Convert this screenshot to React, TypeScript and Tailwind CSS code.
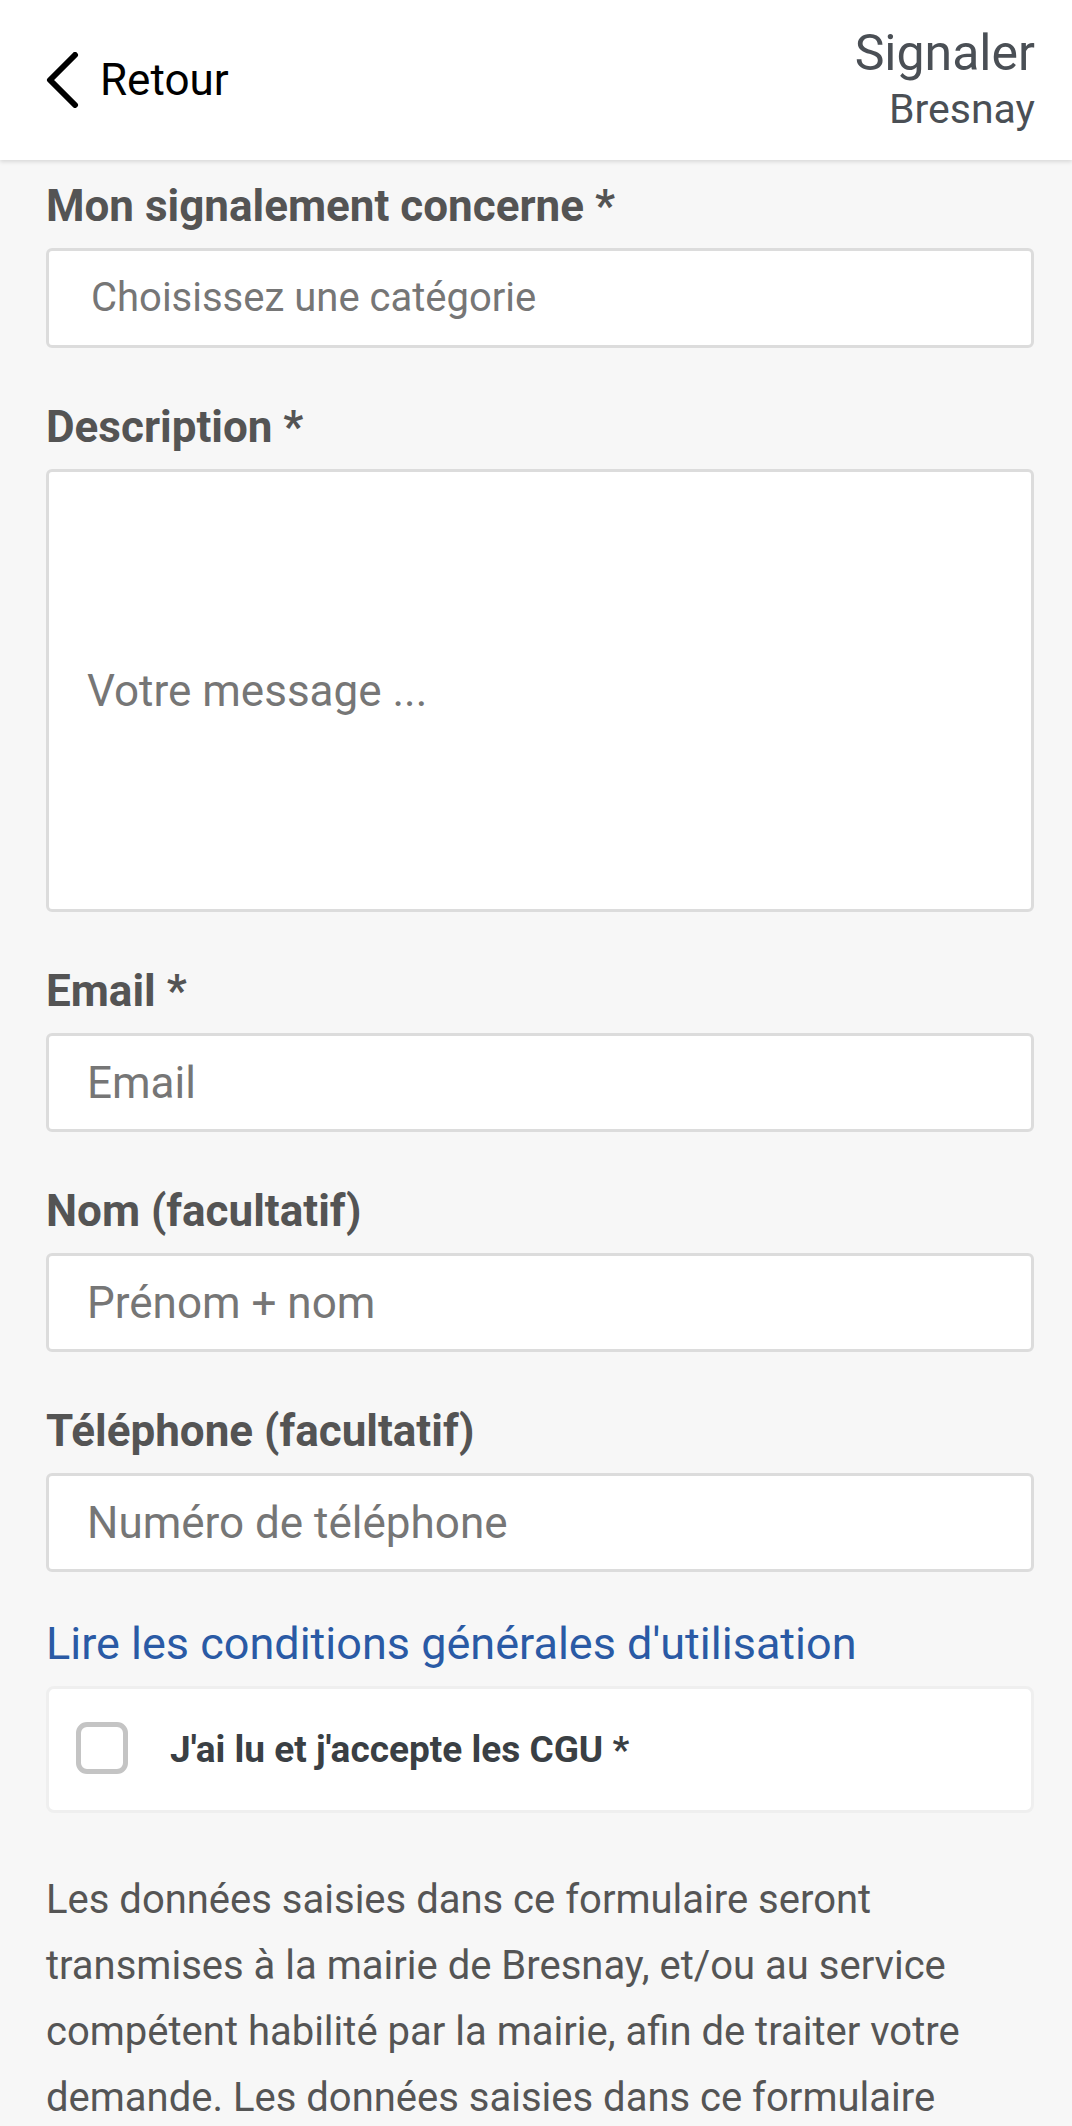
import React from "react";

const fields = [
  { label: "Email *", placeholder: "Email" },
  { label: "Nom (facultatif)", placeholder: "Prénom + nom" },
  { label: "Téléphone (facultatif)", placeholder: "Numéro de téléphone" },
];

const App = () => {
  return (
    <div
      className="min-h-screen bg-[#f7f7f7]"
      style={{ fontFamily: "Roboto, 'Liberation Sans', sans-serif" }}
    >
      {/* Header */}
      <div className="relative z-10 h-[160px] bg-white flex items-center justify-between pl-[46px] pr-[37px] shadow-[0_2px_4px_rgba(0,0,0,0.12)]">
        <button className="flex items-center gap-[20px] text-black">
          <svg width="34" height="56" viewBox="0 0 34 56" fill="none">
            <path d="M29 3 L4 28 L29 53" stroke="#000" strokeWidth="6" strokeLinecap="round" strokeLinejoin="round" />
          </svg>
          <span className="text-[44px] leading-[52px]">Retour</span>
        </button>
        <div className="flex flex-col items-end text-[#4a4f55] mt-[-4px]">
          <span className="text-[50px] leading-[56px]">Signaler</span>
          <span className="text-[41px] leading-[46px] mt-[5px]">Bresnay</span>
        </div>
      </div>

      {/* Form */}
      <div className="pl-[46px] pr-[38px] pt-[20px] pb-[40px]">
        <div className="mb-[53px]">
          <label className="block text-[44px] leading-[52px] font-bold text-[#545454] mb-[16px]">
            Mon signalement concerne *
          </label>
          <div className="h-[100px] bg-white border-[3px] border-[#dcdcdc] rounded-[6px] flex items-center pl-[42px] text-[40px] text-[#767676]">
            Choisissez une catégorie
          </div>
        </div>

        <div className="mb-[53px]">
          <label className="block text-[44px] leading-[52px] font-bold text-[#545454] mb-[16px]">
            Description *
          </label>
          <div className="h-[443px] bg-white border-[3px] border-[#dcdcdc] rounded-[6px] flex items-center pl-[38px] text-[44px] text-[#767676]">
            Votre message ...
          </div>
        </div>

        {fields.map((f, i) => (
          <div key={f.label} className={i === fields.length - 1 ? "mb-[46px]" : "mb-[53px]"}>
            <label className="block text-[44px] leading-[52px] font-bold text-[#545454] mb-[16px]">
              {f.label}
            </label>
            <div className="h-[99px] bg-white border-[3px] border-[#dcdcdc] rounded-[6px] flex items-center pl-[38px] text-[44px] text-[#767676]">
              {f.placeholder}
            </div>
          </div>
        ))}

        <a className="block text-[45px] leading-[52px] text-[#2a5aa5] mb-[16px]">
          Lire les conditions générales d'utilisation
        </a>

        <div className="h-[127px] bg-white border-[3px] border-[#efefef] rounded-[8px] flex items-center pl-[27px] mb-[54px]">
          <div className="w-[52px] h-[52px] border-[5px] border-[#c4c4c4] rounded-[11px] bg-white shrink-0 mt-[-3px]" />
          <span className="ml-[42px] text-[37px] font-bold text-[#3a3f44]">
            J'ai lu et j'accepte les CGU *
          </span>
        </div>

        <p className="text-[40px] leading-[66px] text-[#555555]">
          Les données saisies dans ce formulaire seront transmises à la mairie de Bresnay, et/ou au service compétent habilité par la mairie, afin de traiter votre demande. Les données saisies dans ce formulaire
        </p>
      </div>
    </div>
  );
};

export default App;
